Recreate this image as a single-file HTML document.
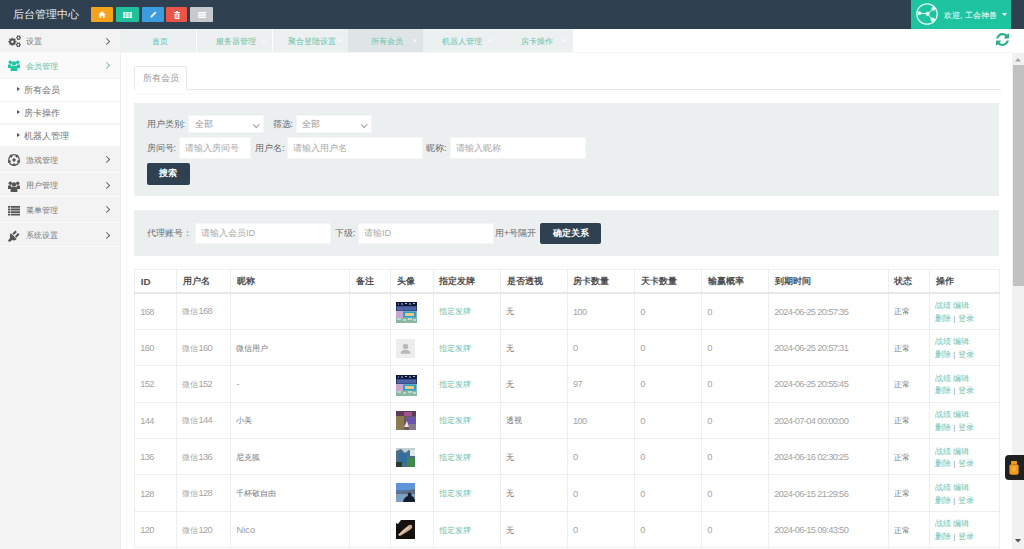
<!DOCTYPE html>
<html><head><meta charset="utf-8">
<style>
*{box-sizing:border-box;margin:0;padding:0}
html,body{width:1024px;height:549px;overflow:hidden;background:#f3f3f4;font-family:"Liberation Sans",sans-serif}
.abs{position:absolute}
#hdr{position:absolute;left:0;top:0;width:1024px;height:28.5px;background:#2f4050}
#title{position:absolute;left:13px;top:7px;font-size:11px;line-height:14px;color:#e9eef2}
.tb{position:absolute;top:6.5px;height:15.5px;border-radius:1px}
#user{position:absolute;left:911px;top:0;width:100px;height:28.8px;background:#1ec3a0}
#user .txt{position:absolute;left:33px;top:9px;font-size:8.4px;line-height:12px;color:#fff;white-space:nowrap}
#side{position:absolute;left:0;top:28.5px;width:120px;height:521px;background:#f3f3f3}
.mi{position:absolute;left:0;width:120px;height:24.5px;border-bottom:1px solid #fafafa;font-size:8.4px;color:#777}
.mi .t{position:absolute;left:26px;top:6.5px;line-height:12px}
.mi .chev{position:absolute;left:104.3px;top:10.2px;width:5.3px;height:5.3px;border-right:1.7px solid #666;border-top:1.7px solid #666;transform:rotate(45deg)}
.sub{position:absolute;left:0;width:120px;height:23px;background:#fff;border-bottom:1px solid #f2f2f2;font-size:9px;color:#737373}
.sub .t{position:absolute;left:23.5px;top:5.5px;line-height:12px}
.sub .tri{position:absolute;left:17px;top:8.5px;width:0;height:0;border-left:3px solid #555;border-top:2.5px solid transparent;border-bottom:2.5px solid transparent}
#tabbar{position:absolute;left:120px;top:28.5px;width:904px;height:24px;background:#fff}
.tab{position:absolute;top:0;width:75px;height:23.5px;background:#edf0f1;font-size:7.6px;color:#62c4a9;text-align:center;line-height:26.5px;padding-left:2px}
.tab.act{background:#dfe4e6}
.tab .x{position:absolute;right:6px;top:0;font-size:8px;color:#fff;line-height:23.5px}
#frame{position:absolute;left:120px;top:52.5px;width:904px;height:496.5px;background:#fff}
#sb{position:absolute;left:1012px;top:53px;width:12px;height:496px;background:#f1f1f1}
#thumb{position:absolute;left:1012.5px;top:65.3px;width:11.5px;height:221px;background:#c1c1c1}
.panel{position:absolute;left:134px;width:865px;background:#eceff0}
.lbl{position:absolute;font-size:9.1px;color:#676a6c;line-height:12px;white-space:nowrap}
.inp{position:absolute;background:#fff;font-size:9px;color:#a9a9a9;line-height:12px;padding-left:5px;white-space:nowrap;border:1px solid #f4f5f6}
.sel{padding-left:5.5px;color:#959595}
.sel:after{content:'';position:absolute;right:4.5px;top:5.5px;width:3.5px;height:3.5px;border-right:1px solid #9a9a9a;border-bottom:1px solid #9a9a9a;transform:rotate(45deg)}
.btn{position:absolute;background:#2f4050;color:#fff;font-size:9px;text-align:center;border-radius:2px;font-weight:bold}
table{position:absolute;left:134.2px;top:269px;border-collapse:collapse;table-layout:fixed;width:864.7px;background:#fff}
td,th{border:1px solid #eeeeee;font-size:8px;color:#a4a4a4;text-align:left;padding:1px 0 0 5px;white-space:nowrap;height:36.4px;font-weight:normal}
th{height:23.5px;font-weight:bold;color:#4f4f4f;font-size:9px;border-bottom:2px solid #e7e7e7;padding-left:5.5px}
td.d{color:#7a7a7a}
.n{font-size:9.3px;letter-spacing:-0.65px}
td.ops{line-height:12.6px;padding-top:3px;color:#999}
td a{color:#72bfae;text-decoration:none}
.av{display:block;margin-left:-0.8px}
</style></head><body>
<div id="hdr">
  <div id="title">后台管理中心</div>
  <div class="tb" style="left:91px;width:22px;background:#f6a31c"><svg class="abs" style="left:7px;top:4.5px" width="8" height="7" viewBox="0 0 8 7"><path d="M4 0.3L0.3 3.6H1.4V6.8H3.2V4.8H4.8V6.8H6.6V3.6H7.7Z" fill="#fff"/></svg></div>
  <div class="tb" style="left:116px;width:23px;background:#1ec19b"><svg class="abs" style="left:7px;top:5px" width="9" height="6" viewBox="0 0 9 6"><path d="M0 0h2.6v1.7H0zM3.2 0h2.6v1.7H3.2zM6.4 0H9v1.7H6.4zM0 2.15h2.6v1.7H0zM3.2 2.15h2.6v1.7H3.2zM6.4 2.15H9v1.7H6.4zM0 4.3h2.6V6H0zM3.2 4.3h2.6V6H3.2zM6.4 4.3H9V6H6.4z" fill="#fff"/></svg></div>
  <div class="tb" style="left:142px;width:22px;background:#3b9de0"><svg class="abs" style="left:7.5px;top:4.5px" width="7" height="7" viewBox="0 0 7 7"><path d="M5.2 0.5L6.5 1.8L2 6.3L0.4 6.6L0.7 5Z" fill="#fff"/></svg></div>
  <div class="tb" style="left:166px;width:21px;background:#ea5548"><svg class="abs" style="left:7.5px;top:4px" width="6" height="8" viewBox="0 0 6 8"><path d="M2 0h2v1h2v1H0V1h2zM0.6 2.5h4.8V8H0.6zM1.8 3.5v3.5h0.8V3.5zM3.4 3.5v3.5h0.8V3.5z" fill="#fff" fill-rule="evenodd"/></svg></div>
  <div class="tb" style="left:190px;width:23px;background:#c6c9cd"><svg class="abs" style="left:7.5px;top:5px" width="8" height="6" viewBox="0 0 8 6"><path d="M0 0h8v1.5H0zM0 2.25h8v1.5H0zM0 4.5h8V6H0z" fill="#fff"/></svg></div>
  <div id="user">
    <svg class="abs" style="left:4.5px;top:2.8px" width="22" height="22" viewBox="0 0 22 22"><g stroke="#dffff5" fill="#dffff5"><circle cx="11" cy="11" r="10.2" fill="none" stroke-width="1.2"/>
<path d="M3.4 10.2L11.6 10.8L17.6 5.7M11.6 10.8L16.6 17" fill="none" stroke-width="1"/></g><g fill="#dffff5"><circle cx="3.4" cy="10.2" r="1.9"/><circle cx="11.6" cy="10.8" r="2.1"/><circle cx="17.4" cy="5.8" r="2"/><circle cx="16.6" cy="16.6" r="2.1"/></g></svg>
    <div class="txt">欢迎, 工会神兽</div><svg class="abs" style="left:90.5px;top:13.3px" width="5" height="3" viewBox="0 0 5 3"><path d="M0 0H5L2.5 3Z" fill="#fff"/></svg>
  </div>
</div>
<div id="side">
  <div class="mi" style="top:0;height:24.3px">
    <svg class="abs" style="left:8px;top:6.5px" width="13" height="13" viewBox="0 0 13 13"><g fill="#555" fill-rule="evenodd"><path d="M7.61 5.93 8.45 6.04 8.45 7.36 7.61 7.47 7.21 8.43 7.73 9.09 6.79 10.03 6.13 9.51 5.17 9.91 5.06 10.75 3.74 10.75 3.63 9.91 2.67 9.51 2.01 10.03 1.07 9.09 1.59 8.43 1.19 7.47 0.35 7.36 0.35 6.04 1.19 5.93 1.59 4.97 1.07 4.31 2.01 3.37 2.67 3.89 3.63 3.49 3.74 2.65 5.06 2.65 5.17 3.49 6.13 3.89 6.79 3.37 7.73 4.31 7.21 4.97ZM5.60 6.7A1.2 1.2 0 1 0 3.20 6.7A1.2 1.2 0 1 0 5.60 6.7Z"/><path d="M12.52 2.12 13.05 2.20 13.05 3.20 12.52 3.28 12.06 4.07 12.26 4.57 11.39 5.07 11.06 4.65 10.14 4.65 9.81 5.07 8.94 4.57 9.14 4.07 8.68 3.28 8.15 3.20 8.15 2.20 8.68 2.12 9.14 1.33 8.94 0.83 9.81 0.33 10.14 0.75 11.06 0.75 11.39 0.33 12.26 0.83 12.06 1.33ZM11.50 2.7A0.9 0.9 0 1 0 9.70 2.7A0.9 0.9 0 1 0 11.50 2.7Z"/><path d="M12.41 9.09 12.95 9.18 12.95 10.22 12.41 10.31 11.93 11.14 12.13 11.64 11.22 12.17 10.88 11.74 9.92 11.74 9.58 12.17 8.67 11.64 8.87 11.14 8.39 10.31 7.85 10.22 7.85 9.18 8.39 9.09 8.87 8.26 8.67 7.76 9.58 7.23 9.92 7.66 10.88 7.66 11.22 7.23 12.13 7.76 11.93 8.26ZM11.35 9.7A0.95 0.95 0 1 0 9.45 9.7A0.95 0.95 0 1 0 11.35 9.7Z"/></g></svg><div class="t">设置</div><div class="chev"></div>
  </div>
  <div class="mi" style="top:24.3px;height:25.7px;background:#fafafa;color:#5dbda5;border-top:1px solid #fdfdfd">
    <svg class="abs" style="left:8px;top:6.5px" width="12" height="11" viewBox="0 0 12 11"><g fill="#1ec49f">
<circle cx="2.3" cy="2.2" r="1.7"/><circle cx="9.7" cy="2.2" r="1.7"/><circle cx="6" cy="3.4" r="2.2"/>
<path d="M0 4.6h3.3v3.5H0zM8.7 4.6H12v3.5H8.7z"/><path d="M2.6 6.2Q6 5.4 9.4 6.2V11H2.6z"/></g></svg><div class="t" style="top:6px">会员管理</div><div class="chev" style="border-color:#7fb9ad;top:9.2px"></div>
  </div>
  <div class="sub" style="top:50px;height:23.1px"><div class="tri"></div><div class="t">所有会员</div></div>
  <div class="sub" style="top:73.1px;height:22.9px"><div class="tri"></div><div class="t">房卡操作</div></div>
  <div class="sub" style="top:96px;height:22.5px"><div class="tri"></div><div class="t">机器人管理</div></div>
  <div class="mi" style="top:118.5px;height:25.8px"><svg class="abs" style="left:8px;top:6.5px" width="12" height="12" viewBox="0 0 12 12"><circle cx="6" cy="6" r="5.9" fill="#555"/><circle cx="6" cy="6" r="4.7" fill="#f3f3f3"/><path d="M6.00 4.10 7.81 5.41 7.12 7.54 4.88 7.54 4.19 5.41ZM9.88 0.66 10.50 2.56 8.88 3.74 7.26 2.56 7.88 0.66ZM12.28 8.04 10.66 9.21 9.04 8.04 9.66 6.14 11.66 6.14ZM6.00 12.60 4.38 11.43 5.00 9.52 7.00 9.52 7.62 11.43ZM-0.28 8.04 0.34 6.14 2.34 6.14 2.96 8.04 1.34 9.21ZM2.12 0.66 4.12 0.66 4.74 2.56 3.12 3.74 1.50 2.56Z" fill="#555"/></svg><div class="t">游戏管理</div><div class="chev"></div></div>
  <div class="mi" style="top:144.3px;height:24.4px"><svg class="abs" style="left:8px;top:8px" width="12" height="11" viewBox="0 0 12 11"><g fill="#555">
<circle cx="2.3" cy="2.2" r="1.7"/><circle cx="9.7" cy="2.2" r="1.7"/><circle cx="6" cy="3.4" r="2.2"/>
<path d="M0 4.6h3.3v3.5H0zM8.7 4.6H12v3.5H8.7z"/><path d="M2.6 6.2Q6 5.4 9.4 6.2V11H2.6z"/></g></svg><div class="t">用户管理</div><div class="chev"></div></div>
  <div class="mi" style="top:168.7px;height:25.4px"><svg class="abs" style="left:8px;top:8.5px" width="12" height="10" viewBox="0 0 12 10"><g fill="#555">
<path d="M0 0h2v1.8H0zM2.6 0H12v1.8H2.6zM0 2.6h2v1.8H0zM2.6 2.6H12v1.8H2.6zM0 5.2h2v1.8H0zM2.6 5.2H12v1.8H2.6zM0 7.8h2v1.8H0zM2.6 7.8H12v1.8H2.6z"/></g></svg><div class="t">菜单管理</div><div class="chev"></div></div>
  <div class="mi" style="top:194.1px;height:24.4px"><svg class="abs" style="left:8px;top:7px" width="12" height="12" viewBox="0 0 12 12"><g fill="#555">
<path d="M2.9 3.3L8.7 9.1Q6.8 11.2 4.3 9.9L1.3 12 0 10.7 2.1 7.7Q0.8 5.2 2.9 3.3Z"/>
<path d="M4.3 3.6L7.4 0.5 8.9 2 5.8 5.1zM6.9 6.2L10 3.1 11.5 4.6 8.4 7.7z"/></g></svg><div class="t">系统设置</div><div class="chev"></div></div>
</div>
<div id="tabbar">
  <div class="tab" style="left:1px">首页</div>
  <div class="tab" style="left:77px">服务器管理<span class="x">×</span></div>
  <div class="tab" style="left:153px">聚合登陆设置<span class="x">×</span></div>
  <div class="tab act" style="left:228px">所有会员<span class="x">×</span></div>
  <div class="tab" style="left:303px">机器人管理<span class="x">×</span></div>
  <div class="tab" style="left:378px">房卡操作<span class="x">×</span></div>
</div>
<div id="frame"></div><div class="abs" style="left:120px;top:28.5px;width:1px;height:521px;background:#eceeef"></div><div class="abs" style="left:125.5px;top:53px;width:1px;height:496px;background:#f7f8f8"></div>
<div class="abs" style="left:120px;top:51.5px;width:892px;height:1.5px;background:#f5f6f6"></div>
<svg class="abs" style="left:996px;top:33px" width="13" height="13" viewBox="0 0 1536 1536"><path fill="#2dae8a" d="M1511 928q0 5-1 7-64 268-268 434.5T764 1536q-146 0-282.5-55T238 1324l-129 129q-19 19-45 19t-45-19-19-45V960q0-26 19-45t45-19h448q26 0 45 19t19 45-19 45l-137 137q71 66 161 102t187 36q134 0 250-65t186-179q11-17 53-117 8-23 30-23h192q13 0 22.5 9.5t9.5 22.5zm25-800v448q0 26-19 45t-45 19h-448q-26 0-45-19t-19-45 19-45l138-138Q969 256 768 256q-134 0-250 65T332 500q-11 17-53 117-8 23-30 23H50q-13 0-22.5-9.5T18 608v-7q65-268 270-434.5T768 0q146 0 284 55.5T1297 212l130-129q19-19 45-19t45 19 19 45z"/></svg>


<div class="abs" style="left:134.5px;top:89px;width:866px;height:1px;background:#e7eaec"></div><div class="abs" style="left:134.5px;top:93px;width:866px;height:1px;background:#f8f8f8"></div>
<div class="abs" style="left:134px;top:66px;width:52.5px;height:24px;background:#fff;border:1px solid #e7eaec;border-bottom-color:#fff;border-radius:2px 2px 0 0"></div>
<div class="lbl" style="left:143px;top:72px;color:#999">所有会员</div>
<div class="panel" style="top:102.5px;height:93px"></div>
<div class="lbl" style="left:146.5px;top:118px">用户类别:</div>
<div class="inp sel" style="left:188px;top:115px;width:76px;height:18px;line-height:16px">全部</div>
<div class="lbl" style="left:272.5px;top:118px">筛选:</div>
<div class="inp sel" style="left:295.5px;top:115px;width:76px;height:18px;line-height:16px">全部</div>
<div class="lbl" style="left:146.5px;top:142px">房间号:</div>
<div class="inp" style="left:179px;top:137.2px;width:72px;height:21.8px;line-height:20px">请输入房间号</div>
<div class="lbl" style="left:255px;top:142px">用户名:</div>
<div class="inp" style="left:287px;top:137.2px;width:136px;height:21.8px;line-height:20px">请输入用户名</div>
<div class="lbl" style="left:426px;top:142px">昵称:</div>
<div class="inp" style="left:450px;top:137.2px;width:136px;height:21.8px;line-height:20px">请输入昵称</div>
<div class="btn" style="left:146.5px;top:163px;width:43.5px;height:21.5px;line-height:21.5px">搜索</div>
<div class="panel" style="top:209.5px;height:46.5px"></div>
<div class="lbl" style="left:146.5px;top:227px">代理账号：</div>
<div class="inp" style="left:195px;top:222.5px;width:136px;height:21px;line-height:19px">请输入会员ID</div>
<div class="lbl" style="left:335px;top:227px">下级:</div>
<div class="inp" style="left:358px;top:222.5px;width:136px;height:21px;line-height:19px">请输ID</div>
<div class="lbl" style="left:495px;top:227px">用+号隔开</div>
<div class="btn" style="left:540px;top:222.5px;width:61px;height:21px;line-height:21px">确定关系</div>
<table><colgroup><col style="width:42.3px"><col style="width:54px"><col style="width:118.7px"><col style="width:41.3px"><col style="width:42.5px"><col style="width:67.1px"><col style="width:66.9px"><col style="width:67.2px"><col style="width:67.2px"><col style="width:66.85px"><col style="width:119.65px"><col style="width:41.3px"><col style="width:69.7px"></colgroup><tr><th><span style="font-size:9.8px">ID</span></th><th>用户名</th><th>昵称</th><th>备注</th><th>头像</th><th>指定发牌</th><th>是否透视</th><th>房卡数量</th><th>天卡数量</th><th>输赢概率</th><th>到期时间</th><th>状态</th><th>操作</th></tr>
<tr><td><span class="n">168</span></td><td>微信<span class="n">168</span></td><td class="d"></td><td></td><td><svg class="av" width="21" height="21" viewBox="0 0 21 21" style="margin-top:1.4px;margin-left:-0.4px"><rect width="21" height="21" fill="#2a3b6a"/><rect y="0" width="21" height="4" fill="#0e1a3c"/><path d="M2 2h1M5 2h2M9 1.5h2M13 2h2M17 1.5h2" stroke="#dfe6ff" stroke-width=".8"/><rect x="1" y="4.5" width="19" height="4" fill="#4d63a8"/><rect y="9" width="21" height="12" fill="#8fb4d8"/><rect x="0" y="9" width="7" height="7" fill="#c7a6cf"/><rect x="7" y="9.5" width="13" height="6" fill="#2f9fbf"/><rect x="9" y="11" width="9" height="3" fill="#e8c98a"/><rect y="16" width="21" height="5" fill="#8ab8a0"/><path d="M1 17h4M7 18h3M12 17h4M17 18h3" stroke="#f5f5f5" stroke-width="1"/></svg></td><td><a>指定发牌</a></td><td class="d">无</td><td><span class="n">100</span></td><td><span class="n">0</span></td><td><span class="n">0</span></td><td><span class="n">2024-06-25 20:57:35</span></td><td class="d">正常</td><td class="ops"><a>战绩</a> <a>编辑</a><br><a>删除</a> | <a>登录</a></td></tr>
<tr><td><span class="n">160</span></td><td>微信<span class="n">160</span></td><td class="d">微信用户</td><td></td><td><svg class="av" width="19" height="18.5" viewBox="0 0 20 19.5" style="margin-left:-0.5px;margin-top:1px"><rect width="20" height="20" fill="#ededed"/><circle cx="10" cy="7.8" r="2.8" fill="#b9b9b9"/><path d="M4.8 15.5Q5 11.6 10 11.4Q15 11.6 15.2 15.5Z" fill="#b9b9b9"/></svg></td><td><a>指定发牌</a></td><td class="d">无</td><td><span class="n">0</span></td><td><span class="n">0</span></td><td><span class="n">0</span></td><td><span class="n">2024-06-25 20:57:31</span></td><td class="d">正常</td><td class="ops"><a>战绩</a> <a>编辑</a><br><a>删除</a> | <a>登录</a></td></tr>
<tr><td><span class="n">152</span></td><td>微信<span class="n">152</span></td><td class="d"><span class="n" style="color:#9d9d9d">-</span></td><td></td><td><svg class="av" width="21" height="21" viewBox="0 0 21 21" style="margin-top:1.4px;margin-left:-0.4px"><rect width="21" height="21" fill="#2a3b6a"/><rect y="0" width="21" height="4" fill="#0e1a3c"/><path d="M2 2h1M5 2h2M9 1.5h2M13 2h2M17 1.5h2" stroke="#dfe6ff" stroke-width=".8"/><rect x="1" y="4.5" width="19" height="4" fill="#4d63a8"/><rect y="9" width="21" height="12" fill="#8fb4d8"/><rect x="0" y="9" width="7" height="7" fill="#c7a6cf"/><rect x="7" y="9.5" width="13" height="6" fill="#2f9fbf"/><rect x="9" y="11" width="9" height="3" fill="#e8c98a"/><rect y="16" width="21" height="5" fill="#8ab8a0"/><path d="M1 17h4M7 18h3M12 17h4M17 18h3" stroke="#f5f5f5" stroke-width="1"/></svg></td><td><a>指定发牌</a></td><td class="d">无</td><td><span class="n">97</span></td><td><span class="n">0</span></td><td><span class="n">0</span></td><td><span class="n">2024-06-25 20:55:45</span></td><td class="d">正常</td><td class="ops"><a>战绩</a> <a>编辑</a><br><a>删除</a> | <a>登录</a></td></tr>
<tr><td><span class="n">144</span></td><td>微信<span class="n">144</span></td><td class="d">小美</td><td></td><td><svg class="av" width="20" height="19" viewBox="0 0 20 19"><rect width="20" height="19" fill="#6a5a5e"/><rect x="0" y="0" width="20" height="5" fill="#5a3e58"/><rect x="8" y="1" width="8" height="4" fill="#a0508a"/><rect x="0" y="5" width="8" height="14" fill="#8c7a4e"/><rect x="11" y="6" width="9" height="8" fill="#6a56b0"/><path d="M8 16L11 10 13 16Z" fill="#e8e0d8"/><rect x="13" y="13" width="7" height="6" fill="#8a7a90"/></svg></td><td><a>指定发牌</a></td><td class="d">透视</td><td><span class="n">100</span></td><td><span class="n">0</span></td><td><span class="n">0</span></td><td><span class="n">2024-07-04 00:00:00</span></td><td class="d">正常</td><td class="ops"><a>战绩</a> <a>编辑</a><br><a>删除</a> | <a>登录</a></td></tr>
<tr><td><span class="n">136</span></td><td>微信<span class="n">136</span></td><td class="d">尼克狐</td><td></td><td><svg class="av" width="19" height="19" viewBox="0 0 19 19"><rect width="19" height="19" fill="#bfcfd2"/><path d="M0 3L5 1 9 5 13 2 19 6V19H0Z" fill="#4a6f86"/><rect x="3" y="5" width="8" height="10" fill="#2f6fa0"/><rect x="11" y="10" width="8" height="9" fill="#3f8a4c"/><rect x="0" y="14" width="6" height="5" fill="#2b3a2e"/><rect x="14" y="2" width="5" height="6" fill="#dfe8ea"/></svg></td><td><a>指定发牌</a></td><td class="d">无</td><td><span class="n">0</span></td><td><span class="n">0</span></td><td><span class="n">0</span></td><td><span class="n">2024-06-16 02:30:25</span></td><td class="d">正常</td><td class="ops"><a>战绩</a> <a>编辑</a><br><a>删除</a> | <a>登录</a></td></tr>
<tr><td><span class="n">128</span></td><td>微信<span class="n">128</span></td><td class="d">千杯敬自由</td><td></td><td><svg class="av" width="19" height="19" viewBox="0 0 19 19" style="margin-top:-1.8px"><rect width="19" height="19" fill="#4a7fc4"/><rect y="0" width="19" height="7" fill="#5d95d8"/><path d="M0 9L8 8 19 6V11H0Z" fill="#5e6f86"/><rect y="11" width="19" height="8" fill="#7d9fc2"/><path d="M7 19Q8 14 12 13Q11 10 13.5 9.5Q16 10 15.5 13Q19 14 19 19Z" fill="#141c30"/></svg></td><td><a>指定发牌</a></td><td class="d">无</td><td><span class="n">0</span></td><td><span class="n">0</span></td><td><span class="n">0</span></td><td><span class="n">2024-06-15 21:29:56</span></td><td class="d">正常</td><td class="ops"><a>战绩</a> <a>编辑</a><br><a>删除</a> | <a>登录</a></td></tr>
<tr><td><span class="n">120</span></td><td>微信<span class="n">120</span></td><td class="d"><span class="n" style="color:#9d9d9d;letter-spacing:0">Nico</span></td><td></td><td><svg class="av" width="19" height="19" viewBox="0 0 19 19" style="margin-top:-1.8px"><rect width="19" height="19" fill="#14110f"/><path d="M0 0H5L2 4 0 3Z" fill="#fff"/><path d="M2 15Q6 10 13 5Q17 4 16 8Q13 11 4 16Z" fill="#c9a98e"/><path d="M3 15Q8 11 13 7" stroke="#e6d0bb" stroke-width="1.2"/></svg></td><td><a>指定发牌</a></td><td class="d">无</td><td><span class="n">0</span></td><td><span class="n">0</span></td><td><span class="n">0</span></td><td><span class="n">2024-06-15 09:43:50</span></td><td class="d">正常</td><td class="ops"><a>战绩</a> <a>编辑</a><br><a>删除</a> | <a>登录</a></td></tr>
</table>
<div id="sb"></div><div id="thumb"></div><svg class="abs" style="left:1015px;top:57.5px" width="6" height="4" viewBox="0 0 6 4"><path d="M0 3.5H6L3 0Z" fill="#a3a3a3"/></svg>
<svg class="abs" style="left:1015px;top:538.5px" width="6" height="4" viewBox="0 0 6 4"><path d="M0 0H6L3 3.5Z" fill="#505050"/></svg>
<div class="abs" style="left:1004.8px;top:455px;width:20px;height:24.6px;background:#202020;border-radius:4px 0 0 4px"></div>
<svg class="abs" style="left:1009px;top:458.5px" width="10" height="17" viewBox="0 0 10 17"><g fill="#f29a1a"><rect x="2" y="2" width="6" height="3" rx=".8"/><rect x="0.4" y="5.2" width="9.2" height="10.5" rx="2"/></g><rect x="3.3" y="7.5" width="3.4" height="5" rx=".8" fill="#f9c060" opacity=".55"/></svg>

</body></html>
